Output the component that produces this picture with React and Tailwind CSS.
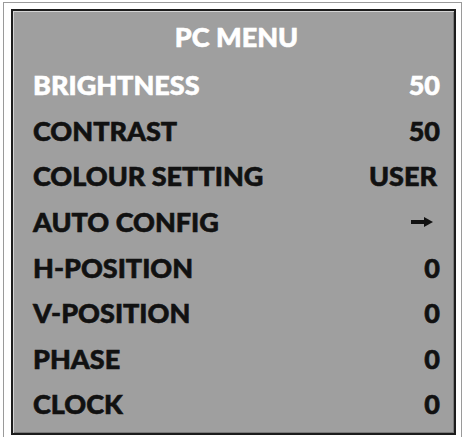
export default function App() {
  const rows = [
    ["BRIGHTNESS", "50", true],
    ["CONTRAST", "50"],
    ["COLOUR SETTING", "USER"],
    ["AUTO CONFIG", "arrow"],
    ["H-POSITION", "0"],
    ["V-POSITION", "0"],
    ["PHASE", "0"],
    ["CLOCK", "0"],
  ];
  return (
    <div className="w-[462px] h-[437px] bg-white overflow-hidden">
      <div className="ml-[3px] mt-[2px] w-[459px] h-[435px] border-l border-t border-r border-[#9a9a9a] pt-[6px] pl-[7px]">
        <div
          className="w-[445px] h-[426px] bg-[#9f9f9f] border-2 border-[#1c1c1c] shadow-[inset_1px_1px_0_#d4d4d4,inset_-1px_-1px_0_#7a7a7a] pl-[20px] pr-[14px] flex flex-col"
          style={{ fontFamily: "Lato, 'DejaVu Sans', sans-serif" }}
        >
          <div className="h-[51px] flex items-center justify-center text-white font-black text-[27px] leading-none [-webkit-text-stroke:0.6px_currentColor]">
            PC MENU
          </div>
          {rows.map(([label, val, sel]) => (
            <div
              key={label}
              className={`h-[45.6px] flex items-center justify-between font-black text-[27px] leading-none [-webkit-text-stroke:0.6px_currentColor] ${sel ? "text-white" : "text-[#111111]"}`}
            >
              <span>{label}</span>
              {val === "arrow" ? (
                <svg width="22" height="10" viewBox="0 0 22 10" className="mr-[7px]">
                  <rect x="0" y="3" width="15" height="4" fill="#111111" />
                  <polygon points="13,0 22,5 13,10" fill="#111111" />
                </svg>
              ) : (
                <span className={val === "USER" ? "mr-[3px]" : ""}>{val}</span>
              )}
            </div>
          ))}
        </div>
      </div>
    </div>
  );
}
